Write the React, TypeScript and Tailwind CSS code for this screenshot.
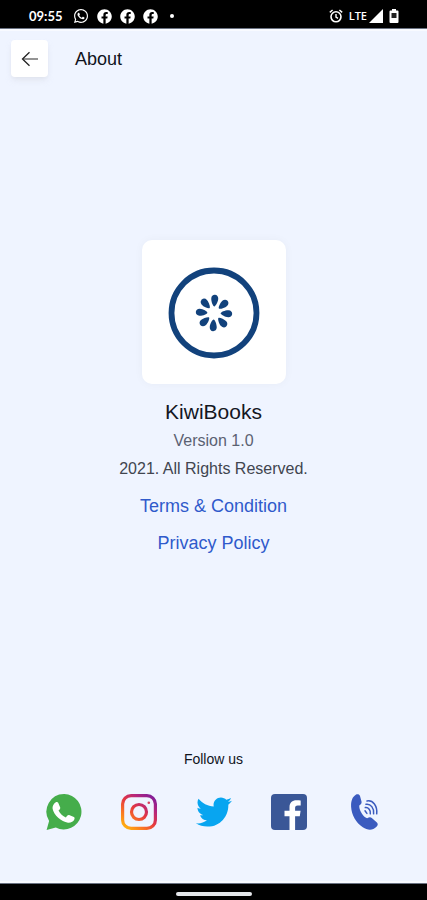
import type { ReactNode } from 'react'
import { FaFacebook, FaTwitter, FaWhatsapp } from 'react-icons/fa'

const PETALS = [0, 45, 90, 135, 180, 225, 270, 315]

function StatusBar() {
  return (
    <div className="flex h-[29px] items-center justify-between border-b border-gray-500 bg-black pt-1 pr-7 pl-[29px] text-white">
      <div className="flex items-center gap-2">
        <span className="mr-0.5 font-['Lato',sans-serif] text-[13px] leading-4 font-bold">09:55</span>
        <FaWhatsapp className="size-[16px]" />
        <FaFacebook className="size-[15px]" />
        <FaFacebook className="size-[15px]" />
        <FaFacebook className="size-[15px]" />
        <span className="ml-1 size-1 rounded-full bg-white" />
      </div>
      <div className="flex items-center">
        <svg viewBox="0 0 14 14" className="mr-1.5 size-[14px]" fill="none" stroke="currentColor">
          <circle cx="7" cy="7.8" r="5" strokeWidth="1.6" />
          <path d="M7 5v3l2 1.3M.8 3.4 3.6 1M13.2 3.4 10.4 1" strokeWidth="1.4" />
        </svg>
        <span className="mr-0.5 font-['Open_Sans',sans-serif] text-[11px] leading-4 font-semibold">LTE</span>
        <svg viewBox="0 0 14 14" className="size-[14px]" fill="currentColor">
          <path d="M14 0v14H0z" />
        </svg>
        <svg viewBox="0 0 10 14" className="ml-1.5 h-[14px] w-[10px]">
          <path d="M3 0h4v1.5h1.5q1 0 1 1V13q0 1-1 1h-7q-1 0-1-1V2.500q0-1 1-1H3z" fill="#fff" />
          <path d="M2.500 4h5v5h-5z" fill="#222" />
        </svg>
      </div>
    </div>
  )
}

function KiwiLogo() {
  return (
    <svg viewBox="0 0 92 92" className="size-[92px]" aria-label="KiwiBooks logo">
      <circle cx="46" cy="46" r="42.500" fill="none" stroke="#12427c" strokeWidth="5.800" />
      {PETALS.map((angle) => (
        <path
          key={angle}
          d="M46 39.400C44.800 39.400 42.500 34.800 42.500 31.600C42.500 29.300 44 27.800 46 27.800C48 27.800 49.500 29.300 49.500 31.600C49.500 34.800 47.200 39.400 46 39.400Z"
          fill="#12427c"
          transform={`rotate(${angle + 3} 46 46)`}
        />
      ))}
    </svg>
  )
}

function WhatsappIcon() {
  return (
    <svg viewBox="0 0 36 36" className="size-9">
      <path d="M18.300 0A17.700 17.700 0 1 1 9.800 33.500L.6 36 3.100 27A17.700 17.700 0 0 1 18.300 0Z" fill="#45ad4b" />
      <path
        d="M9.800 8.300c.8-.5 2-.4 2.400.5l2 4.600c.3.800-.1 1.600-1.700 3.200 1.700 3.300 4.200 5.500 7.400 6.800 1.700-2.300 2.300-2.700 3.200-2.300l4.800 2c.9.500.8 1.300.5 2.200-.7 2.300-3.600 3.600-6.400 3.400-6.700-.7-14.300-7.700-15.400-13.900-.4-2.500.9-5 3.200-6.500Z"
        fill="#fff"
      />
    </svg>
  )
}

function InstagramIcon() {
  return (
    <svg viewBox="0 0 36 36" className="size-9" fill="none">
      <defs>
        <linearGradient id="insta" x1="4" y1="35" x2="32" y2="1" gradientUnits="userSpaceOnUse">
          <stop offset="0" stopColor="#ffb60d" />
          <stop offset="0.250" stopColor="#fb7a21" />
          <stop offset="0.500" stopColor="#e5383f" />
          <stop offset="0.750" stopColor="#b4257d" />
          <stop offset="1" stopColor="#7d1c9b" />
        </linearGradient>
      </defs>
      <rect x="1.600" y="1.600" width="32.800" height="32.800" rx="8.500" stroke="url(#insta)" strokeWidth="3.200" />
      <circle cx="18" cy="18" r="7.500" stroke="url(#insta)" strokeWidth="3.200" />
      <circle cx="27.800" cy="8.800" r="1.300" fill="#d9405c" />
    </svg>
  )
}

function FacebookIcon() {
  return (
    <svg viewBox="0 0 36 36" className="size-9">
      <rect width="36" height="36" rx="4" fill="#3a5797" />
      <path
        d="M18.500 36V22.300h-5v-5.500h5v-3.700c0-4.600 2.800-6.900 7-6.900 2 0 3.600.2 4.200.3v4.900h-2.900c-2.200 0-2.700 1.100-2.700 2.700v2.700h5.500l-.8 5.500h-4.700V36Z"
        fill="#fff"
      />
    </svg>
  )
}

function CallIcon() {
  return (
    <svg viewBox="-2 0 36 36" className="size-9" fill="none">
      <path
        d="M7.800.7c1.900-.9 3.600-.3 4.200 1.400l1.500 5.400c.4 1.900-.5 2.900-2.200 4-.5 4.300 3.600 11.300 7.800 12.800 2-1.100 3.500-1.300 4.700-.2l5.100 4.300c1.300 1.300 1.100 2.900-.4 4.400-3.900 3.900-8.900 3.600-13.700.4C7.700 28.700 3.600 20.700 3.100 12.800 2.900 7.300 4.100 3 7.800.7Z"
        fill="#3b5bbf"
      />
      <g stroke="#3b5bbf" strokeWidth="1.500" strokeLinecap="round">
        <path d="M19 7c6-1.200 10.500 5 9.700 12.800" />
        <path d="M18 10.300c4.700-.9 8.300 4 7.600 9.500" />
        <path d="M17.300 13.600c3.200-.5 5.500 2.700 5 6.200" />
        <path d="M17 16.800l1.900 2.600" />
      </g>
    </svg>
  )
}

const SOCIALS: { name: string; icon: ReactNode }[] = [
  { name: 'WhatsApp', icon: <WhatsappIcon /> },
  { name: 'Instagram', icon: <InstagramIcon /> },
  { name: 'Twitter', icon: <FaTwitter className="size-9 text-[#08a5f0]" /> },
  { name: 'Facebook', icon: <FacebookIcon /> },
  { name: 'Call', icon: <CallIcon /> },
]

export default function App() {
  return (
    <div className="flex min-h-screen flex-col bg-[#eff4ff] font-['Liberation_Sans',sans-serif]">
      <StatusBar />

      <header className="flex items-center gap-[27px] border-t-2 border-[#f8faff] px-[11px] py-[9px]">
        <button
          type="button"
          aria-label="Back"
          className="flex size-[37px] items-center justify-center rounded bg-white shadow-md shadow-gray-300/40"
        >
          <svg viewBox="0 0 18 16" className="h-4 w-[18px]" fill="none">
            <path d="M2 8h15" stroke="#888" strokeWidth="1.800" />
            <path d="M8.500 1.300 1.500 8l7 6.700" stroke="#222" strokeWidth="1.300" />
          </svg>
        </button>
        <h1 className="text-[18px] leading-6 text-[#10131c]">About</h1>
      </header>

      <main className="flex flex-1 flex-col items-center justify-center text-center">
        <div className="flex size-36 items-center justify-center rounded-[10px] bg-white pt-0.5 shadow-[0_0_10px_rgba(0,0,0,0.04)]">
          <KiwiLogo />
        </div>
        <h2 className="mt-4 text-[21px] leading-6 text-[#14171f]">KiwiBooks</h2>
        <p className="mt-[5px] text-[16px] leading-6 text-[#5b6172]">Version 1.0</p>
        <p className="mt-1 text-[16px] leading-6 text-[#41454f]">2021. All Rights Reserved.</p>
        <a href="#terms" className="mt-[13px] text-[18px] leading-6 text-[#2f5acb]">
          Terms &amp; Condition
        </a>
        <a href="#privacy" className="mt-[13px] text-[18px] leading-6 text-[#2f5acb]">
          Privacy Policy
        </a>
      </main>

      <footer className="border-b-2 border-[#f8faff] px-[26px] pt-10 pb-[51px]">
        <p className="text-center text-[14px] leading-5 text-[#10131c]">Follow us</p>
        <div className="mt-[25px] grid grid-cols-5 justify-items-center">
          {SOCIALS.map((s) => (
            <a key={s.name} href={`#${s.name.toLowerCase()}`} aria-label={s.name}>
              {s.icon}
            </a>
          ))}
        </div>
      </footer>

      <div className="flex h-[17px] items-center justify-center border-t border-gray-500 bg-black pt-1">
        <span className="h-1 w-[76px] rounded-full bg-gray-200" />
      </div>
    </div>
  )
}
